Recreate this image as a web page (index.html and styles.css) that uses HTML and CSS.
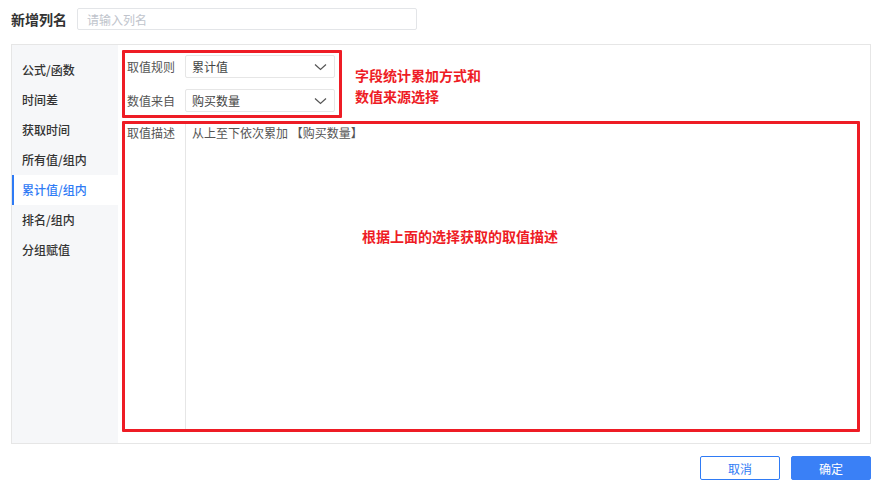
FILE: index.html
```html
<!DOCTYPE html>
<html lang="zh-CN">
<head>
  <meta charset="utf-8">
  <title>新增列名</title>
  <link rel="stylesheet" href="styles.css">
</head>
<body>
  <div class="header">
    <span class="title">新增列名</span>
    <input class="name-input" type="text" placeholder="请输入列名">
  </div>

  <div class="panel">
    <div class="sidebar">
      <div class="item">公式/函数</div>
      <div class="item">时间差</div>
      <div class="item">获取时间</div>
      <div class="item">所有值/组内</div>
      <div class="item active">累计值/组内</div>
      <div class="item">排名/组内</div>
      <div class="item">分组赋值</div>
    </div>

    <div class="content">
      <div class="top">
        <div class="mark select-box">
          <div class="row">
            <span class="label">取值规则</span>
            <div class="select">
              <span>累计值</span>
              <svg class="arrow" width="13" height="8" viewBox="0 0 13 8"><path d="M1 1.5 L6.5 6.5 L12 1.5" fill="none" stroke="#555" stroke-width="1.2"/></svg>
            </div>
          </div>
          <div class="row">
            <span class="label">数值来自</span>
            <div class="select">
              <span>购买数量</span>
              <svg class="arrow" width="13" height="8" viewBox="0 0 13 8"><path d="M1 1.5 L6.5 6.5 L12 1.5" fill="none" stroke="#555" stroke-width="1.2"/></svg>
            </div>
          </div>
        </div>
        <div class="note">字段统计累加方式和<br>数值来源选择</div>
      </div>

      <div class="mark desc-box">
        <span class="label">取值描述</span>
        <div class="desc">从上至下依次累加 【购买数量】</div>
        <div class="note note-center">根据上面的选择获取的取值描述</div>
      </div>
    </div>
  </div>

  <div class="footer">
    <button class="btn cancel">取消</button>
    <button class="btn ok">确定</button>
  </div>
</body>
</html>
```

FILE: styles.css
```css
body {
  margin: 0;
  font-family: "Noto Sans CJK SC", "Noto Sans", sans-serif;
  font-size: 12px;
  color: #333;
  background: #fff;
}

.header {
  display: flex;
  align-items: center;
  height: 22px;
  padding: 8px 11px 14px;
}
.title {
  font-size: 14px;
  font-weight: bold;
  color: #333;
  margin-right: 10px;
}
.name-input {
  box-sizing: border-box;
  width: 340px;
  height: 22px;
  border: 1px solid #e3e5e8;
  border-radius: 2px;
  padding: 0 9px;
  font-family: inherit;
  font-size: 12px;
  outline: none;
}
.name-input::placeholder {
  color: #c0c4cc;
}

.panel {
  display: flex;
  box-sizing: border-box;
  height: 400px;
  margin: 0 10px 0 11px;
  border: 1px solid #e6e6e6;
}

.sidebar {
  width: 106px;
  background: #f6f7f9;
  padding-top: 10px;
}
.item {
  height: 30px;
  line-height: 30px;
  padding-left: 8px;
  font-weight: 500;
  color: #333;
  border-left: 2px solid transparent;
}
.item.active {
  background: #fff;
  color: #2f7bf5;
  border-left-color: #2f7bf5;
}

.content {
  flex: 1;
  display: flex;
  flex-direction: column;
  padding: 5px 10px 11px 4px;
}

.mark {
  border: 3px solid #ee1c25;
  border-radius: 1px;
}

.top {
  display: flex;
  margin-bottom: 3px;
}
.select-box {
  width: 212px;
  padding: 2px 0 3px 2px;
}
.row {
  display: flex;
  align-items: center;
}
.row + .row {
  margin-top: 11px;
}
.label {
  width: 58px;
  color: #555;
  flex-shrink: 0;
}
.select {
  box-sizing: border-box;
  width: 150px;
  height: 23px;
  border: 1px solid #e6e6e6;
  border-radius: 2px;
  display: flex;
  align-items: center;
  justify-content: space-between;
  padding: 0 7px 0 6px;
  color: #444;
}

.note {
  color: #ee1c25;
  font-size: 14px;
  font-weight: bold;
  line-height: 21px;
  margin: 15px 0 0 13px;
}

.desc-box {
  flex: 1;
  display: flex;
  position: relative;
  padding-left: 2px;
}
.desc-box .label {
  padding-top: 1px;
  line-height: 16px;
}
.desc {
  flex: 1;
  border-left: 1px solid #e6e6e6;
  padding: 1px 6px;
  line-height: 16px;
  color: #555;
}
.note-center {
  position: absolute;
  left: 237px;
  top: 102px;
  margin: 0;
}

.footer {
  display: flex;
  justify-content: flex-end;
  gap: 11px;
  padding: 12px 10px 0;
}
.btn {
  width: 80px;
  height: 24px;
  border-radius: 2px;
  font-family: inherit;
  font-size: 12px;
  cursor: pointer;
}
.cancel {
  background: #fff;
  border: 1px solid #2f7bf5;
  color: #2f7bf5;
}
.ok {
  background: #3a80f6;
  border: 1px solid #3a80f6;
  color: #fff;
}
```
